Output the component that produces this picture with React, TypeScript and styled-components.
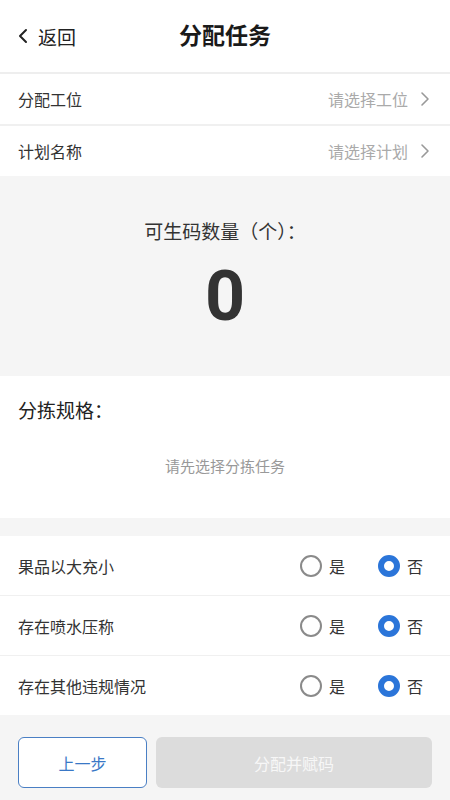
import styled, { createGlobalStyle } from "styled-components";
import { useState } from "react";

const GlobalStyle = createGlobalStyle`
    * {
        box-sizing: border-box;
    }
    body {
        margin: 0;
        background: #f5f5f5;
        font-family: "Noto Sans CJK SC", "Noto Sans", sans-serif;
        color: #333;
    }
`;

const Page = styled.div`
    width: 450px;
    min-height: 800px;
    display: flex;
    flex-direction: column;
    background: #f5f5f5;
`;

const Header = styled.header`
    height: 74px;
    background: #fff;
    display: grid;
    grid-template-columns: 1fr auto 1fr;
    align-items: center;
    padding: 0 18px;
    border-bottom: 2px solid #eeeeee;
`;

const Back = styled.div`
    display: flex;
    align-items: center;
    gap: 10px;
    font-size: 19px;
    color: #222;
`;

const Title = styled.h1`
    margin: 0;
    font-size: 23px;
    font-weight: 700;
    color: #1a1a1a;
    position: relative;
    top: -2px;
`;

const SelectRow = styled.div<{ $last?: boolean }>`
    height: ${(p) => (p.$last ? "50px" : "52px")};
    background: #fff;
    display: flex;
    align-items: center;
    justify-content: space-between;
    padding: 0 20px 0 18px;
    border-bottom: ${(p) => (p.$last ? "none" : "2px solid #f0f0f0")};
    font-size: 16px;
    color: #333;
`;

const SelectValue = styled.div`
    display: flex;
    align-items: center;
    gap: 12px;
    color: #aaa;
    font-size: 16px;
`;

const CountBox = styled.section`
    height: 200px;
    background: #f5f5f5;
    display: flex;
    flex-direction: column;
    align-items: center;
    padding-top: 42px;
`;

const CountLabel = styled.div`
    font-size: 19px;
    line-height: 26px;
    color: #333;
`;

const CountNumber = styled.div`
    margin-top: 17px;
    font-family: Roboto, "Noto Sans", sans-serif;
    font-size: 70px;
    line-height: 70px;
    font-weight: 700;
    color: #333;
`;

const SpecBox = styled.section`
    height: 142px;
    background: #fff;
    padding: 21px 18px 0;
    display: flex;
    flex-direction: column;
`;

const SpecTitle = styled.div`
    font-size: 19px;
    line-height: 26px;
    color: #222;
`;

const SpecEmpty = styled.div`
    margin-top: 32px;
    text-align: center;
    font-size: 15px;
    color: #999;
`;

const RadioList = styled.section`
    margin-top: 18px;
    background: #fff;
`;

const RadioRow = styled.div<{ $last?: boolean }>`
    height: ${(p) => (p.$last ? "59px" : "60px")};
    display: flex;
    align-items: center;
    padding: 0 18px;
    border-bottom: ${(p) => (p.$last ? "none" : "1px solid #f0f0f0")};
`;

const RadioLabel = styled.div`
    flex: 1;
    font-size: 16px;
    color: #333;
`;

const Options = styled.div`
    display: flex;
    align-items: center;
    gap: 33px;
    padding-right: 9px;
`;

const Option = styled.label`
    display: flex;
    align-items: center;
    gap: 7px;
    font-size: 16px;
    color: #333;
    cursor: pointer;
`;

const Circle = styled.span<{ $checked: boolean }>`
    width: 22px;
    height: 22px;
    border-radius: 50%;
    border: ${(p) => (p.$checked ? "6px solid #2b75d9" : "2px solid #8a8a8a")};
    background: #fff;
`;

const Footer = styled.footer`
    display: flex;
    gap: 9px;
    padding: 22px 18px 12px;
`;

const Button = styled.button<{ $primary?: boolean }>`
    height: 51px;
    border-radius: 6px;
    font-family: "Noto Sans CJK SC", "Noto Sans", sans-serif;
    font-size: 16px;
    cursor: pointer;
    border: ${(p) => (p.$primary ? "none" : "1px solid #4a7fc4")};
    background: ${(p) => (p.$primary ? "#dcdcdc" : "#fff")};
    color: ${(p) => (p.$primary ? "#f7f7f7" : "#3a78c6")};
    width: ${(p) => (p.$primary ? "auto" : "129px")};
    flex: ${(p) => (p.$primary ? "1" : "none")};
`;

const Chevron = ({ left }: { left?: boolean }) => (
    <svg width="10" height="16" viewBox="0 0 10 16" fill="none">
        <path
            d={left ? "M8 2 L2 8 L8 14" : "M2 2 L8 8 L2 14"}
            stroke={left ? "#222" : "#999"}
            strokeWidth={left ? 2 : 1.6}
            strokeLinecap="round"
            strokeLinejoin="round"
        />
    </svg>
);

const questions = ["果品以大充小", "存在喷水压称", "存在其他违规情况"];

function App() {
    const [answers, setAnswers] = useState<boolean[]>([false, false, false]);

    const setAnswer = (i: number, v: boolean) => {
        setAnswers((a) => a.map((x, j) => (j === i ? v : x)));
    };

    return (
        <Page>
            <GlobalStyle />
            <Header>
                <Back>
                    <Chevron left />
                    返回
                </Back>
                <Title>分配任务</Title>
                <div />
            </Header>
            <SelectRow>
                分配工位
                <SelectValue>
                    请选择工位
                    <Chevron />
                </SelectValue>
            </SelectRow>
            <SelectRow $last>
                计划名称
                <SelectValue>
                    请选择计划
                    <Chevron />
                </SelectValue>
            </SelectRow>
            <CountBox>
                <CountLabel>可生码数量（个）：</CountLabel>
                <CountNumber>0</CountNumber>
            </CountBox>
            <SpecBox>
                <SpecTitle>分拣规格：</SpecTitle>
                <SpecEmpty>请先选择分拣任务</SpecEmpty>
            </SpecBox>
            <RadioList>
                {questions.map((q, i) => (
                    <RadioRow key={q} $last={i === questions.length - 1}>
                        <RadioLabel>{q}</RadioLabel>
                        <Options>
                            <Option onClick={() => setAnswer(i, true)}>
                                <Circle $checked={answers[i]} />
                                是
                            </Option>
                            <Option onClick={() => setAnswer(i, false)}>
                                <Circle $checked={!answers[i]} />
                                否
                            </Option>
                        </Options>
                    </RadioRow>
                ))}
            </RadioList>
            <Footer>
                <Button>上一步</Button>
                <Button $primary disabled>
                    分配并赋码
                </Button>
            </Footer>
        </Page>
    );
}

export default App;
